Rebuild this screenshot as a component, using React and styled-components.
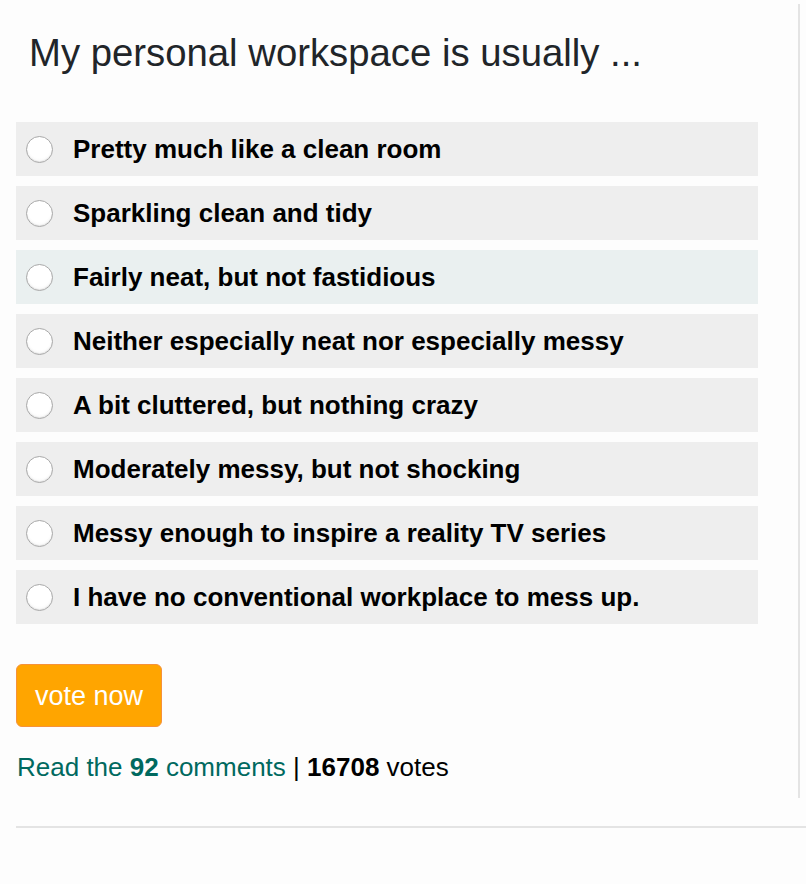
import React from "react";
import styled, { createGlobalStyle } from "styled-components";

const Global = createGlobalStyle`
  html, body { margin: 0; padding: 0; background: #fdfdfd; }
  body { font-family: "Liberation Sans", Arial, Helvetica, sans-serif; overflow: hidden; }
`;

const Page = styled.div`
  padding-left: 16px;
  padding-top: 4px;
`;

const Panel = styled.section`
  width: 782px;
  height: 767px;
  padding-top: 27px;
  border-right: 2px solid #e4e4e4;
  box-sizing: content-box;
`;

const Title = styled.h2`
  margin: 0 0 47px 13px;
  font-size: 38.3px;
  line-height: 44px;
  font-weight: 400;
  color: #212529;
`;

const OptionList = styled.ul`
  list-style: none;
  margin: 0;
  padding: 0;
  width: 742px;
  display: flex;
  flex-direction: column;
  gap: 10px;
`;

const Option = styled.li`
  height: 54px;
  display: flex;
  align-items: center;
  gap: 20px;
  padding-left: 10px;
  background: ${(p) => (p.$hover ? "#eaf0f0" : "#eeeeee")};
  cursor: pointer;
`;

const Radio = styled.span`
  width: 27px;
  height: 27px;
  flex: none;
  border-radius: 50%;
  box-sizing: border-box;
  border: 1px solid #a9a9a9;
  background: radial-gradient(circle at 50% 40%, #ffffff 55%, #f0f0f0 100%);
  box-shadow: inset 0 -1px 1px rgba(0, 0, 0, 0.08);
`;

const Label = styled.span`
  font-size: 26px;
  line-height: 30px;
  font-weight: 700;
  color: #000;
`;

const VoteButton = styled.button`
  margin-top: 40px;
  display: block;
  height: 63px;
  padding: 0 18px;
  border: 1px solid #f6923a;
  border-radius: 6px;
  background: #ffa500;
  color: #fff;
  font-family: "Liberation Sans", Arial, sans-serif;
  font-size: 27px;
  line-height: 30px;
  cursor: pointer;
`;

const Meta = styled.p`
  margin: 25px 0 0 1px;
  font-size: 26px;
  line-height: 30px;
  color: #000;
`;

const Link = styled.a`
  color: #00695f;
  text-decoration: none;
`;

const Rule = styled.hr`
  margin: 28px 0 0 0;
  border: 0;
  height: 2px;
  background: #e4e4e4;
  width: 800px;
`;

const options = [
  "Pretty much like a clean room",
  "Sparkling clean and tidy",
  "Fairly neat, but not fastidious",
  "Neither especially neat nor especially messy",
  "A bit cluttered, but nothing crazy",
  "Moderately messy, but not shocking",
  "Messy enough to inspire a reality TV series",
  "I have no conventional workplace to mess up.",
];

export default function App() {
  return (
    <>
      <Global />
      <Page>
        <Panel>
          <Title>My personal workspace is usually ...</Title>
          <OptionList>
            {options.map((o, i) => (
              <Option key={o} $hover={i === 2}>
                <Radio />
                <Label>{o}</Label>
              </Option>
            ))}
          </OptionList>
          <VoteButton>vote now</VoteButton>
          <Meta>
            <Link href="#">
              Read the <b>92</b> comments
            </Link>{" "}
            | <b>16708</b> votes
          </Meta>
        </Panel>
        <Rule />
      </Page>
    </>
  );
}
